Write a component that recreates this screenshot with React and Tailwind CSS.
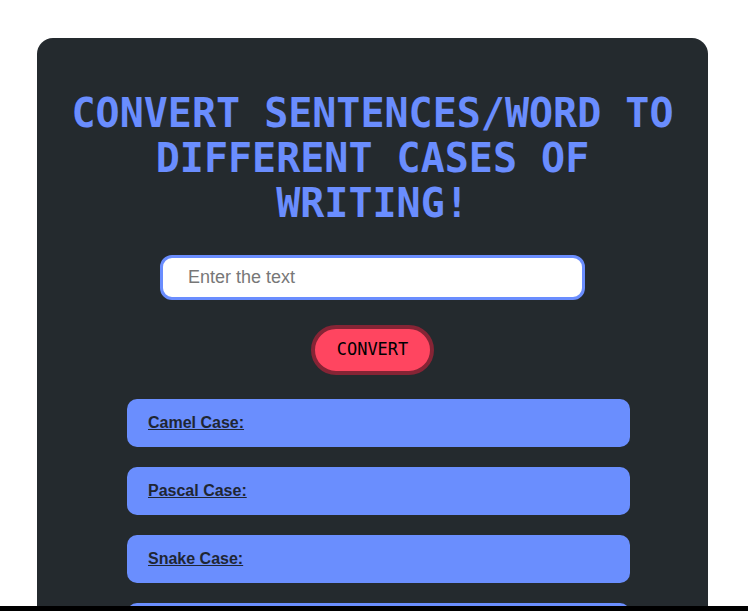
export default function App() {
  const cases = ['Camel Case:', 'Pascal Case:', 'Snake Case:', 'Kebab Case:', 'Trim:']

  return (
    <div className="h-[611px] flex flex-col bg-white overflow-hidden">
      <div className="flex-1 min-h-0 overflow-hidden pt-[38px]">
        <div className="mx-[37px] w-[671px] bg-[#242a2e] rounded-[16px] pt-[53px] pb-10 flex flex-col items-center">
          <h1 className="text-center text-[40px] leading-[45px] font-bold text-[#6a8dfe] px-8 font-['DejaVu_Sans_Mono',monospace]">
            CONVERT SENTENCES/WORD TO DIFFERENT CASES OF WRITING!
          </h1>

          <input
            type="text"
            placeholder="Enter the text"
            className="mt-[29px] w-[425px] h-[45px] bg-white border-[3px] border-[#6a8dfe] rounded-[12px] pl-[25px] text-[18px] text-black placeholder:text-[#777] outline-none font-['Liberation_Sans',Arial,sans-serif]"
          />

          <button className="mt-[25px] w-[123px] h-[50px] rounded-full bg-[#ff4560] border-[4px] border-[#862435] text-[17px] text-black font-['DejaVu_Sans_Mono',monospace]">
            CONVERT
          </button>

          <div className="mt-[24px] self-start ml-[90px] flex flex-col gap-5">
            {cases.map((c) => (
              <div key={c} className="w-[503px] h-[48px] rounded-[10px] bg-[#6a8efe] flex items-center pl-[21px]">
                <span className="text-[16px] font-bold underline text-[#1f2633] font-['Liberation_Sans',Arial,sans-serif]">{c}</span>
              </div>
            ))}
          </div>
        </div>
      </div>
      <div className="h-[5px] bg-black shrink-0" />
    </div>
  )
}
